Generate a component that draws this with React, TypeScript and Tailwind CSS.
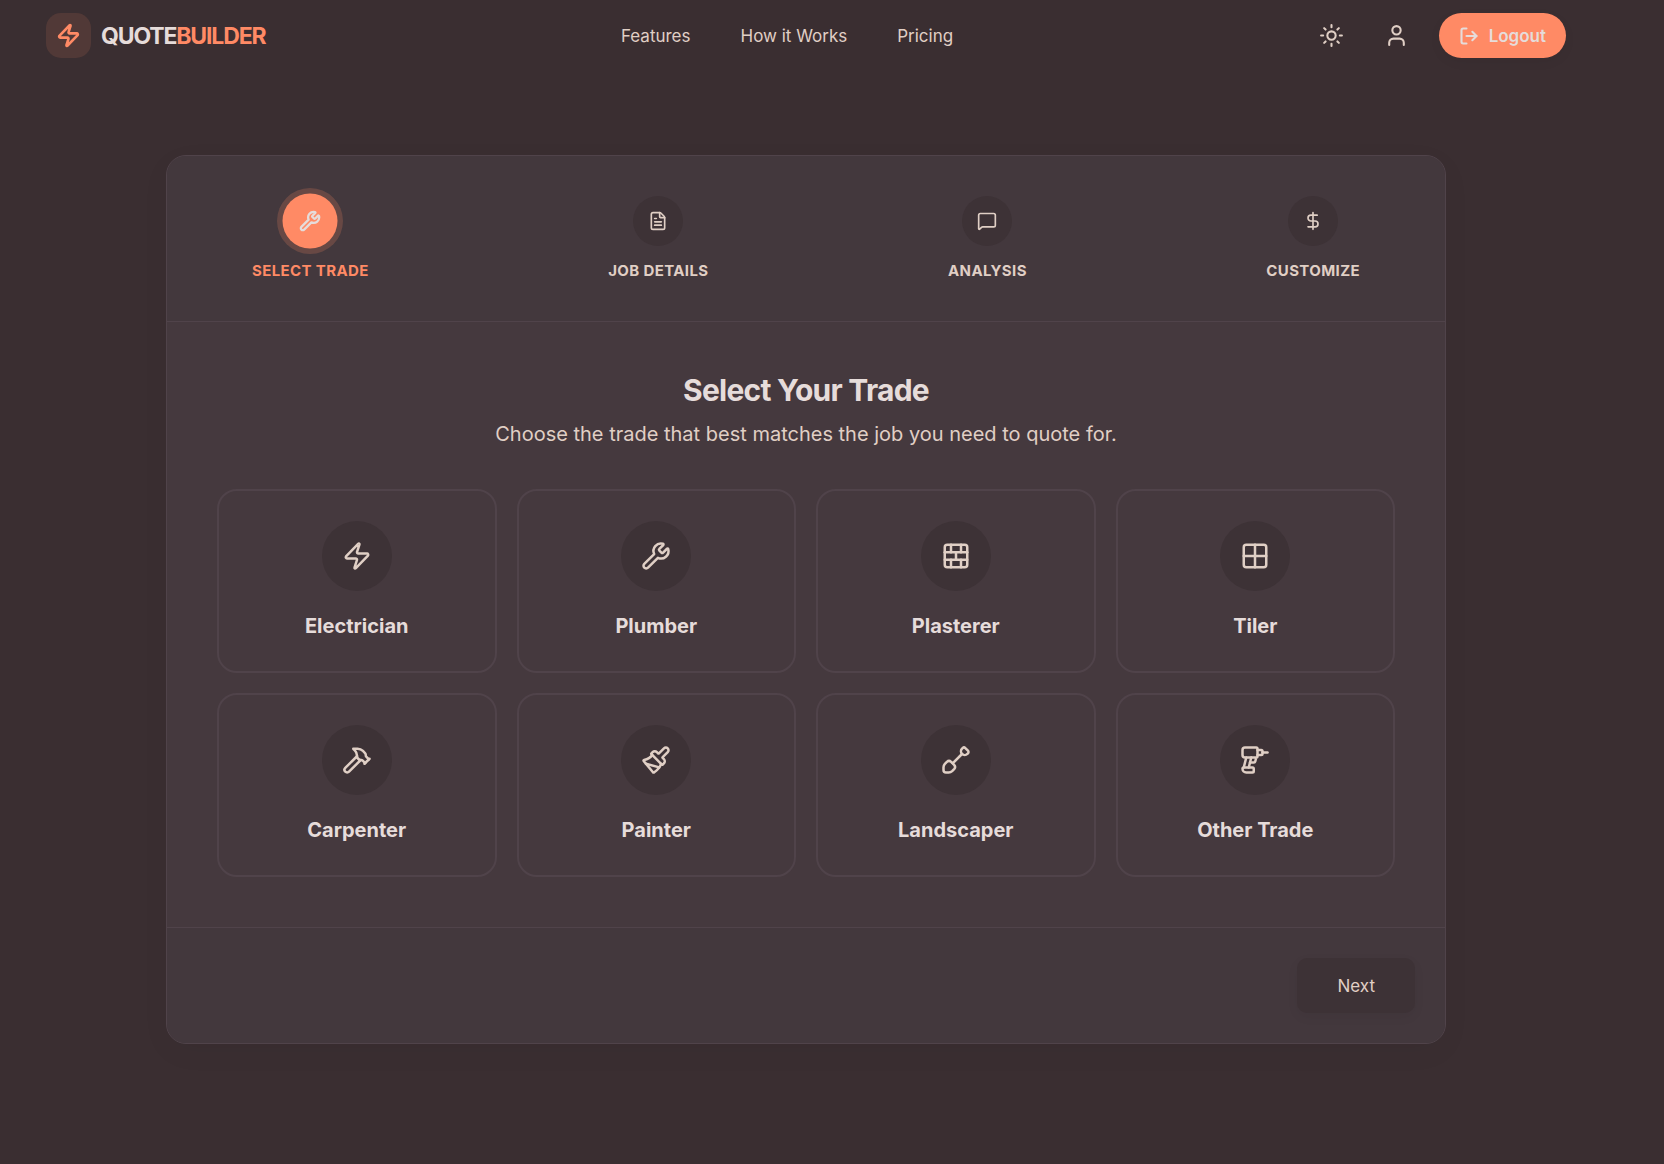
import {
    BrickWall,
    DollarSign,
    Drill,
    FileText,
    Grid2x2,
    Hammer,
    LogOut,
    MessageSquare,
    Paintbrush,
    Sun,
    User,
    Wrench,
    Zap,
} from "lucide-react";

// Shovel with a rounded blade
function Shovel({ size = 24 }: { size?: number }) {
    return (
        <svg
            width={size}
            height={size}
            viewBox="0 0 24 24"
            fill="none"
            stroke="currentColor"
            strokeWidth="2"
            strokeLinecap="round"
            strokeLinejoin="round"
        >
            <path d="M21.56 4.56a1.5 1.5 0 0 1 0 2.122l-.47.47a3 3 0 0 1-4.24 0 3 3 0 0 1 0-4.24l.47-.47a1.5 1.5 0 0 1 2.121 0z" />
            <path d="M4 22a2 2 0 0 1-2-2v-2.2a4 4 0 0 1 1.1-2.7l1.6-1.6a2.5 2.5 0 0 1 3.4 0l2.4 2.4a2.5 2.5 0 0 1 0 3.4l-1.6 1.6a4 4 0 0 1-2.7 1.1z" />
            <path d="m9.5 14.5 7.3-7.3" />
        </svg>
    );
}

const links = ["Features", "How it Works", "Pricing"];

const steps = [
    { label: "Select Trade", icon: Wrench },
    { label: "Job Details", icon: FileText },
    { label: "Analysis", icon: MessageSquare },
    { label: "Customize", icon: DollarSign },
];

const trades = [
    { name: "Electrician", icon: Zap },
    { name: "Plumber", icon: Wrench },
    { name: "Plasterer", icon: BrickWall },
    { name: "Tiler", icon: Grid2x2 },
    { name: "Carpenter", icon: Hammer },
    { name: "Painter", icon: Paintbrush },
    { name: "Landscaper", icon: Shovel },
    { name: "Other Trade", icon: Drill },
];

function Header() {
    return (
        <header className="w-full max-w-[1520px] mx-auto py-[13px] flex items-center justify-between">
            <a href="#" className="flex items-center gap-[10px]">
                <span className="size-[45px] rounded-[15px] bg-[#ff8a65]/12 text-[#ff8a65] flex items-center justify-center">
                    <Zap size={25} strokeWidth={2.5} />
                </span>
                <span className="text-[23px] leading-[36px] font-bold tracking-tighter">
                    QUOTE<span className="text-[#ff8a65]">BUILDER</span>
                </span>
            </a>

            <nav className="flex items-center gap-[50px]">
                {links.map((link) => (
                    <a key={link} href="#" className="text-[17px] leading-[28px] text-[#e0cfc5]">
                        {link}
                    </a>
                ))}
            </nav>

            <div className="flex items-center gap-5">
                <button aria-label="Toggle theme" className="size-[45px] flex items-center justify-center text-[#e0cfc5]">
                    <Sun size={25} />
                </button>
                <button aria-label="Profile" className="size-[45px] flex items-center justify-center text-[#e0cfc5]">
                    <User size={25} />
                </button>
                <button className="h-[45px] px-5 rounded-full bg-[#ff8a65] shadow-[0_4px_12px_rgba(0,0,0,0.05)] flex items-center gap-[10px] text-[17px] leading-[28px] font-semibold">
                    <LogOut size={20} strokeWidth={2.5} />
                    Logout
                </button>
            </div>
        </header>
    );
}

function Stepper() {
    return (
        <ol className="px-[85px] py-10 flex justify-between bg-[#43383d] border-b border-[#50434a]">
            {steps.map(({ label, icon: Icon }, index) => (
                <li key={label} className="flex flex-col items-center gap-[15px]">
                    {index === 0 ? (
                        <span className="size-[50px] rounded-full bg-[#ff8a65] ring-[5px] ring-[#ff8a65]/20 scale-110 flex items-center justify-center">
                            <Icon size={20} strokeWidth={2.5} />
                        </span>
                    ) : (
                        <span className="size-[50px] rounded-full bg-[#3d3236] text-[#e0cfc5] flex items-center justify-center">
                            <Icon size={20} />
                        </span>
                    )}
                    <span
                        className={
                            index === 0
                                ? "text-[15px] leading-[20px] font-bold uppercase tracking-wide text-[#ff8a65]"
                                : "text-[15px] leading-[20px] font-bold uppercase tracking-wide text-[#e0cfc5]"
                        }
                    >
                        {label}
                    </span>
                </li>
            ))}
        </ol>
    );
}

export default function App() {
    return (
        <div className="min-h-screen pr-[52px] bg-[#3a2e31] text-[#e6dcda] font-['Inter',sans-serif]">
            <Header />

            <main className="w-full max-w-7xl mx-auto pt-[84px] pb-[120px]">
                <div className="rounded-[20px] border border-[#50434a] bg-[#45393e] shadow-[0_8px_30px_rgba(0,0,0,0.04)] overflow-hidden">
                    <Stepper />

                    <section className="p-[50px]">
                        <h1 className="text-[30px] leading-[37px] font-bold tracking-tight text-center">Select Your Trade</h1>
                        <p className="mt-[10px] text-[20px] leading-[30px] text-center text-[#e0cfc5]">
                            Choose the trade that best matches the job you need to quote for.
                        </p>

                        <div className="mt-10 grid grid-cols-4 gap-5">
                            {trades.map(({ name, icon: Icon }) => (
                                <button
                                    key={name}
                                    className="p-[30px] rounded-[20px] border-2 border-[#50434a] flex flex-col items-center gap-5"
                                >
                                    <span className="size-[70px] rounded-full bg-[#3d3236] text-[#e0cfc5] flex items-center justify-center">
                                        <Icon size={30} />
                                    </span>
                                    <span className="text-[20px] leading-[30px] font-bold">{name}</span>
                                </button>
                            ))}
                        </div>
                    </section>

                    {/* Footer actions */}
                    <div className="p-[30px] flex justify-end bg-[#43383d] border-t border-[#50434a]">
                        <button className="h-[55px] px-10 rounded-[10px] bg-[#3d3236] shadow-[0_4px_12px_rgba(0,0,0,0.05)] text-[17px] leading-[28px] text-[#e0cfc5]">
                            Next
                        </button>
                    </div>
                </div>
            </main>
        </div>
    );
}
